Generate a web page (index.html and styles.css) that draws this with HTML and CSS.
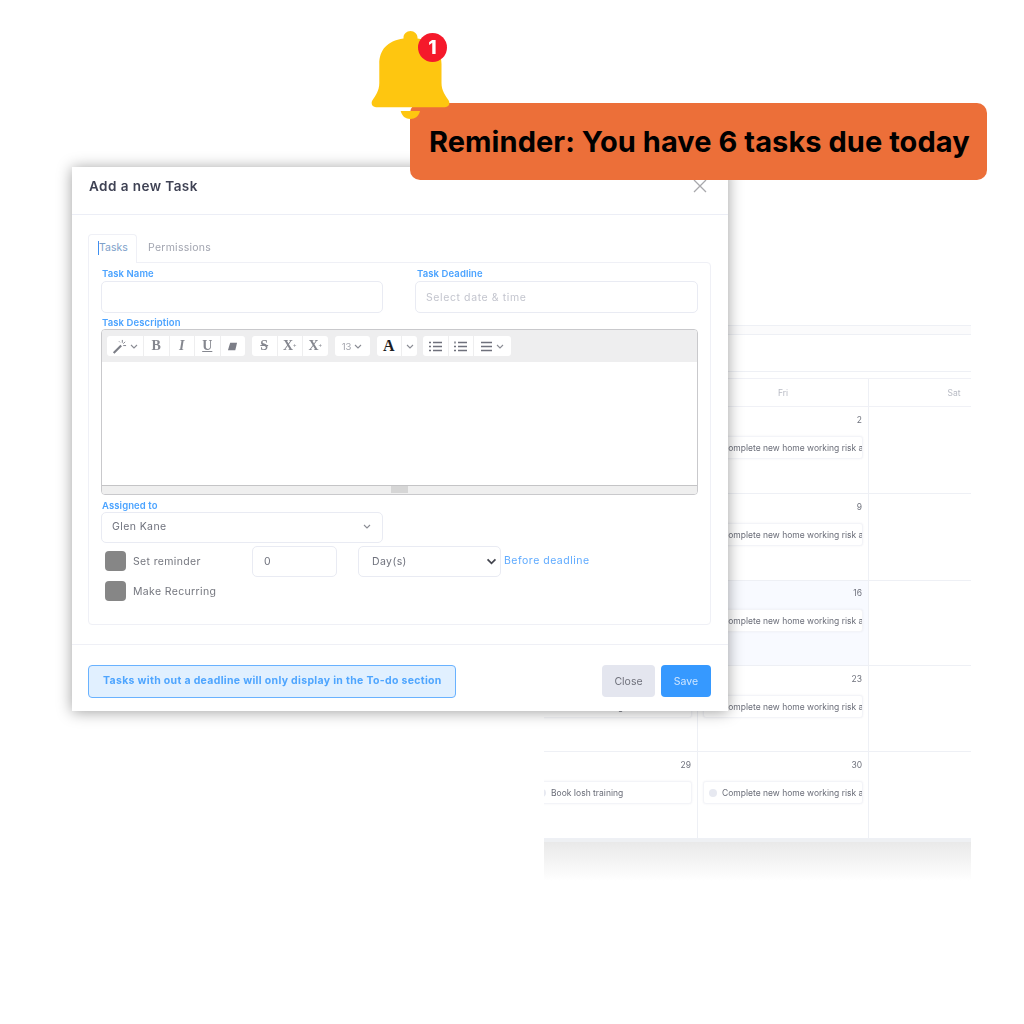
FILE: index.html
```html
<!DOCTYPE html>
<html lang="en">
<head>
<meta charset="utf-8">
<title>Add a new Task</title>
<link rel="stylesheet" href="styles.css">
</head>
<body>
<main class="canvas">
  <section class="calendar">
    <div class="cal-top"></div>
    <div class="cal-bar"></div>
    <div class="cal-grid">
      <div class="head">Thu</div><div class="head">Fri</div><div class="head">Sat</div>

      <div class="cell"><span class="num">1</span></div>
      <div class="cell"><span class="num">2</span><div class="chip"><i></i><span>Complete new home working risk assessment</span></div></div>
      <div class="cell"></div>

      <div class="cell"><span class="num">8</span></div>
      <div class="cell"><span class="num">9</span><div class="chip"><i></i><span>Complete new home working risk assessment</span></div></div>
      <div class="cell"></div>

      <div class="cell"><span class="num">15</span></div>
      <div class="cell today"><span class="num">16</span><div class="chip"><i></i><span>Complete new home working risk assessment</span></div></div>
      <div class="cell"></div>

      <div class="cell"><span class="num">22</span><div class="chip"><i></i><span>Book Iosh training</span></div></div>
      <div class="cell"><span class="num">23</span><div class="chip"><i></i><span>Complete new home working risk assessment</span></div></div>
      <div class="cell"></div>

      <div class="cell"><span class="num">29</span><div class="chip"><i></i><span>Book Iosh training</span></div></div>
      <div class="cell"><span class="num">30</span><div class="chip"><i></i><span>Complete new home working risk assessment</span></div></div>
      <div class="cell"></div>
    </div>
    <div class="cal-fade"></div>
  </section>

  <section class="modal">
    <header class="modal-head">
      <h2>Add a new Task</h2>
      <svg class="close-x" viewBox="0 0 14 14" width="14" height="14"><path d="M1 1l12 12M13 1L1 13"/></svg>
    </header>
    <div class="modal-body">
      <div class="tabs">
        <div class="tab active"><span>Tasks</span></div>
        <div class="tab">Permissions</div>
      </div>
      <div class="panel">
        <div class="two">
          <div class="field name">
            <label>Task Name</label>
            <div class="input"></div>
          </div>
          <div class="field">
            <label>Task Deadline</label>
            <div class="input placeholder">Select date &amp; time</div>
          </div>
        </div>
        <label class="desc-label">Task Description</label>
        <div class="editor">
          <div class="toolbar">
            <div class="group">
              <div class="btn w36">
                <svg viewBox="0 0 16 16" width="15" height="15"><path class="ink" d="M1 14l8-8 1.600 1.600-8 8z"/><path class="thin" d="M11 1v3M14 3l-2 2M15 7h-3M7.500 2.500l1 1"/></svg>
                <svg class="chev" viewBox="0 0 8 5" width="8" height="5"><path d="M1 1l3 3 3-3"/></svg>
              </div>
              <div class="btn glyph bold">B</div>
              <div class="btn glyph ital">I</div>
              <div class="btn glyph under">U</div>
              <div class="btn"><svg viewBox="0 0 12 12" width="11" height="11"><path class="ink" d="M3.500 2H11L9 10H1z"/></svg></div>
            </div>
            <div class="group">
              <div class="btn glyph strike">S</div>
              <div class="btn glyph bold">X<sup>+</sup></div>
              <div class="btn glyph bold">X<sub>+</sub></div>
            </div>
            <div class="group">
              <div class="btn w35 size">13<svg class="chev" viewBox="0 0 8 5" width="8" height="5"><path d="M1 1l3 3 3-3"/></svg></div>
            </div>
            <div class="group tight">
              <div class="btn glyph black">A</div>
              <div class="btn w15"><svg class="chev" viewBox="0 0 8 5" width="8" height="5"><path d="M1 1l3 3 3-3"/></svg></div>
            </div>
            <div class="group">
              <div class="btn"><svg viewBox="0 0 13 11" width="13" height="11"><path class="lines" d="M4 1.500h9M4 5.500h9M4 9.500h9M0 1.500h2M0 5.500h2M0 9.500h2"/></svg></div>
              <div class="btn"><svg viewBox="0 0 13 11" width="13" height="11"><path class="lines" d="M4 1.500h9M4 5.500h9M4 9.500h9M1 .5v2M0 5.500h2M0 9.500h2"/></svg></div>
              <div class="btn w37">
                <svg viewBox="0 0 12 11" width="12" height="11"><path class="lines" d="M0 1.500h11M0 5.500h11M0 9.500h11"/></svg>
                <svg class="chev" viewBox="0 0 8 5" width="8" height="5"><path d="M1 1l3 3 3-3"/></svg>
              </div>
            </div>
          </div>
          <div class="edit-area"></div>
          <div class="resize"><span></span></div>
        </div>
        <label class="assign-label">Assigned to</label>
        <div class="input select-assign">
          <span>Glen Kane</span>
          <svg class="chev" viewBox="0 0 8 5" width="8" height="5"><path d="M1 1l3 3 3-3"/></svg>
        </div>
        <div class="options">
          <div class="checks">
            <div class="check-row"><span class="box"></span><span>Set reminder</span></div>
            <div class="check-row"><span class="box"></span><span>Make Recurring</span></div>
          </div>
          <div class="input num-input">0</div>
          <div class="input day-select">
            <span>Day(s)</span>
            <svg viewBox="0 0 12 8" width="11" height="7"><path d="M1.500 1.500L6 6l4.500-4.500"/></svg>
          </div>
          <span class="before">Before deadline</span>
        </div>
      </div>
    </div>
    <footer class="modal-foot">
      <div class="alert">Tasks with out a deadline will only display in the To-do section</div>
      <div class="actions">
        <button class="b-close">Close</button>
        <button class="b-save">Save</button>
      </div>
    </footer>
  </section>

  <div class="banner">Reminder: You have 6 tasks due today</div>
  <svg class="bell" viewBox="0 0 80 90" width="80" height="90">
    <path d="M39.500 0c-3.900 0-7 3-7 6.500V7.500C16 10 8.300 19 8.300 33v19c0 8-4 13-7 17.500C-.5 73 1.500 76.300 5 76.300h69c3.500 0 5.500-3.300 3.700-6.800-3-4.500-7.200-9.500-7.200-17.500V33C70.500 19 63 10 46.500 7.500V6.500c0-3.500-3.100-6.500-7-6.500z" fill="#fec610"/>
    <path d="M29.700 80H49c-1 5-5 8-9.700 8s-8.500-3-9.600-8z" fill="#fec610"/>
  </svg>
  <div class="badge">1</div>
</main>
</body>
</html>
```

FILE: styles.css
```css
* { box-sizing: border-box; }
html, body { margin: 0; padding: 0; background: #fff; }
body { font-family: Inter, "Noto Sans", Arial, sans-serif; }

.canvas { position: relative; width: 1024px; height: 1024px; overflow: hidden; background: #fff; }

/* Calendar behind the modal */
.calendar { position: absolute; left: 544px; top: 325px; width: 427px; overflow: hidden; filter: blur(.6px); }
.cal-top { height: 10px; background: #fbfbfc; border-top: 1px solid #eef0f5; border-bottom: 1px solid #eef0f5; }
.cal-bar { height: 37px; border-bottom: 1px solid #eef0f5; }
.cal-grid { display: grid; grid-template-columns: 171px 171px 171px; grid-template-rows: 28px 87px 87px 85px 86px 87px; margin-left: -17px; width: 513px; margin-top: 6px; border-top: 1px solid #f0f1f6; }
.head { display: flex; align-items: center; justify-content: center; font-size: 8.500px; color: #b8bbc4; border-right: 1px solid #eef0f5; border-bottom: 1px solid #f0f1f6; }
.cell { display: flex; flex-direction: column; padding: 6px 5px 0 5px; border-right: 1px solid #eef0f5; border-bottom: 1px solid #eef0f5; min-width: 0; }
.cell.today { padding-top: 5px; background: #f8faff; }
.num { height: 15px; line-height: 15px; text-align: right; font-size: 8.500px; color: #6f727d; padding-right: 1px; }
.chip { display: flex; align-items: center; gap: 5px; height: 23px; margin-top: 8px; padding: 0 0 0 5px; overflow: hidden; white-space: nowrap; background: #fff; border: 1px solid #f3f4f8; border-radius: 3px; font-size: 8.500px; color: #6a6d78; box-shadow: 0 0 2px rgba(60,70,110,.08); }
.chip i { flex: none; width: 8px; height: 8px; border-radius: 50%; background: #e7e9f1; }
.chip span { overflow: hidden; }
.cal-fade { height: 42px; background: linear-gradient(#e9e9e9, #fff); border-top: 3px solid #eef0f3; }

/* Modal */
.modal { position: absolute; left: 72px; top: 167px; width: 656px; height: 544px; display: flex; flex-direction: column; background: #fff; box-shadow: 0 1px 14px rgba(0,0,0,.38); filter: blur(.6px); color: #6f727d; }
.modal-head { flex: none; height: 48px; display: flex; align-items: center; justify-content: space-between; padding: 0 21px 9px 17px; border-bottom: 1px solid #eceef6; }
.modal-head h2 { margin: 0; font-size: 13.500px; font-weight: 600; letter-spacing: .45px; color: #3f4254; }
.close-x path { fill: none; stroke: #a8a8ac; stroke-width: 1.300; }
.modal-body { flex: none; height: 430px; padding: 19px 17px 0 16px; border-bottom: 1px solid #eff0f6; }
.tabs { display: flex; height: 29px; font-size: 10.500px; color: #a2a5b0; letter-spacing: .25px; }
.tab { display: flex; align-items: center; padding: 0 11px 2px; }
.tab.active { width: 49px; padding: 0 0 2px 9px; color: #7e9fc9; background: #fff; border: 1px solid #eff0f6; border-bottom: 0; border-radius: 4px 4px 0 0; position: relative; z-index: 1; margin-bottom: -1px; height: 29px; letter-spacing: 0; }
.tab.active span { border-left: 1px solid #3f8ff0; line-height: 14px; }
.panel { height: 363px; margin-top: -1px; padding: 5px 12px 0 12px; border: 1px solid #eff0f6; border-radius: 0 4px 4px 4px; }
.two { display: flex; gap: 32px; }
.field { width: 283px; display: flex; flex-direction: column; }
.field.name { width: 282px; }
label { display: block; font-size: 9.500px; font-weight: 600; letter-spacing: .1px; color: #4ba3ff; line-height: 11px; padding-left: 1px; }
.two .field + .field label { padding-left: 2px; }
.input { height: 32px; margin-top: 2px; display: flex; align-items: center; background: #fff; border: 1px solid #e9ebf3; border-radius: 5px; font-size: 10.500px; color: #6f727d; letter-spacing: .4px; }
.placeholder { padding-left: 10px; color: #c3c5ce; letter-spacing: .6px; }
.desc-label { margin-top: 4px; }
.editor { width: 597px; height: 166px; margin-top: 1px; border: 1px solid #c9c9cc; border-radius: 4px; overflow: hidden; display: flex; flex-direction: column; }
.toolbar { flex: none; height: 32px; display: flex; align-items: center; gap: 7px; padding: 0 5px; background: #eeeeef; }
.group { display: flex; gap: 1px; }
.tight { margin-right: -1px; }
.btn { width: 24.500px; height: 20px; display: flex; align-items: center; justify-content: center; gap: 3px; background: #fff; color: #85878f; font-size: 12px; }
.group .btn:first-child { border-radius: 3px 0 0 3px; }
.group .btn:last-child { border-radius: 0 3px 3px 0; }
.group .btn:only-child { border-radius: 3px; }
.w36 { width: 36px; }
.w35 { width: 35px; }
.w37 { width: 37px; }
.w15 { width: 15px; }
.glyph { gap: 0; font-family: "Liberation Serif", serif; font-size: 14px; }
.bold { font-weight: 700; }
.ital { font-style: italic; font-weight: 700; }
.under { text-decoration: underline; font-weight: 700; }
.strike { text-decoration: line-through; font-weight: 700; }
.black { color: #1d1d22; font-weight: 700; font-size: 16px; }
.size { font-size: 9.500px; color: #a0a2aa; letter-spacing: -.2px; }
.btn sup, .btn sub { font-size: 6px; line-height: 0; }
.ink { fill: #7c7e87; }
.thin { fill: none; stroke: #7c7e87; stroke-width: 1; }
.lines { fill: none; stroke: #6f717c; stroke-width: 1.400; }
.chev path { fill: none; stroke: #8a8c94; stroke-width: 1.100; }
.edit-area { flex: none; height: 124px; background: #fff; border-bottom: 1px solid #c4c4c6; }
.resize { flex: 1; background: #efefef; display: flex; justify-content: center; }
.resize span { width: 17px; height: 7px; background: #d6d6d6; }
.assign-label { margin-top: 5px; }
.select-assign { width: 282px; height: 31px; margin-top: 1px; justify-content: space-between; padding: 0 11px 2px 10px; }
.options { display: flex; align-items: flex-start; margin-top: 3px; }
.checks { width: 151px; padding: 5px 0 0 4px; display: flex; flex-direction: column; gap: 10px; }
.check-row { display: flex; align-items: center; gap: 7px; height: 20px; font-size: 10.500px; letter-spacing: .35px; color: #75777f; }
.box { width: 21px; height: 20px; border-radius: 4px; background: #868686; }
.num-input { width: 85px; height: 31px; margin-top: 0; padding-left: 11px; }
.day-select { width: 143px; height: 31px; margin: 0 0 0 21px; padding: 0 3px 0 13px; justify-content: space-between; }
.day-select svg path { fill: none; stroke: #44464f; stroke-width: 2; }
.before { margin: 8px 0 0 3px; font-size: 10.500px; letter-spacing: .5px; color: #5eaaff; }
.modal-foot { flex: 1; display: flex; align-items: flex-start; justify-content: space-between; padding: 20px 17px 0 16px; }
.alert { width: 368px; height: 33px; display: flex; align-items: center; padding: 0 0 2px 14px; font-size: 10.500px; font-weight: 700; letter-spacing: .32px; color: #4ea5ff; background: #e1f0ff; border: 1.500px solid #69b2ff; border-radius: 4px; white-space: nowrap; }
.actions { display: flex; gap: 6px; }
.actions button { height: 32px; padding: 0; border: 0; border-radius: 4px; font-family: inherit; font-size: 10.500px; }
.b-close { width: 53px; background: #e4e6ef; color: #70727c; }
.b-save { width: 50px; background: #3699ff; color: #cfe6ff; }

/* Overlaid notification */
.banner { position: absolute; left: 410px; top: 103px; width: 577px; height: 77px; display: flex; align-items: center; padding-left: 19px; background: #ec6f39; border-radius: 10px; font-size: 29px; font-weight: 700; letter-spacing: .06px; color: #000; white-space: nowrap; }
.bell { position: absolute; left: 371px; top: 31px; }
.badge { position: absolute; left: 418px; top: 33px; width: 29px; height: 29px; display: flex; align-items: center; justify-content: center; border-radius: 50%; background: #f5192b; color: #fff; font-size: 19px; font-weight: 800; }
```
